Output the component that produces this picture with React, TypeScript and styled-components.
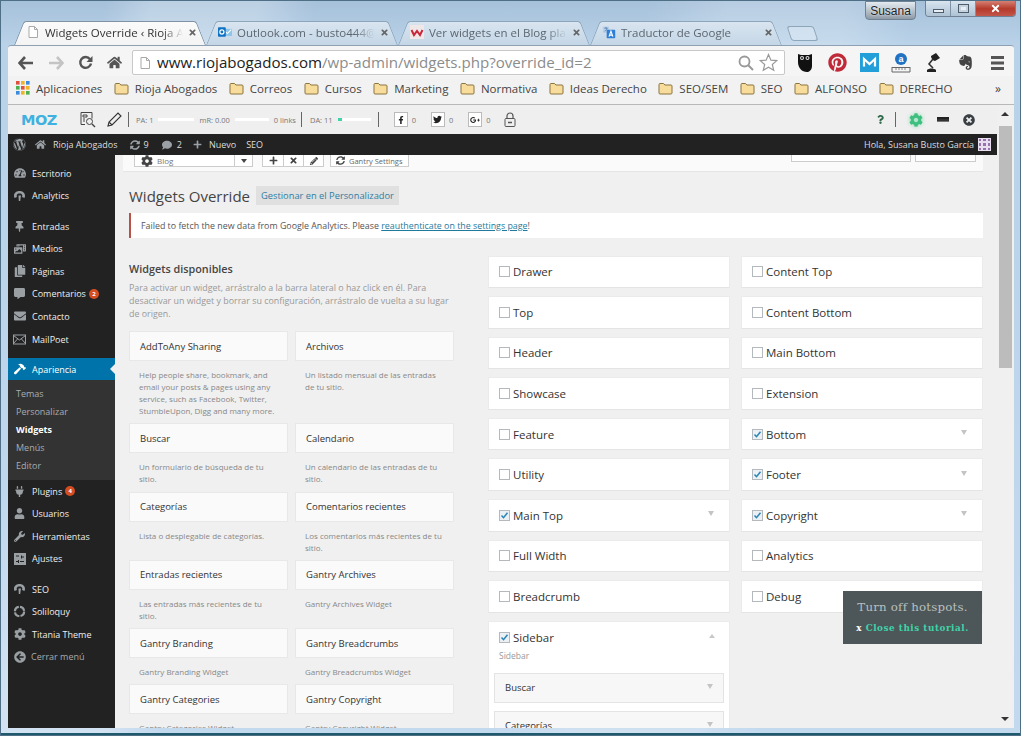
import React, { FC, ReactNode } from 'react'
import styled, { createGlobalStyle } from 'styled-components'
import {
  FaArrowCircleLeft,
  FaComment,
  FaCommentAlt,
  FaCopy,
  FaCog,
  FaEnvelope,
  FaEvernote,
  FaFacebookF,
  FaGooglePlusG,
  FaHammer,
  FaHome,
  FaPencilAlt,
  FaPhotoVideo,
  FaPinterest,
  FaPlug,
  FaPlus,
  FaQuestion,
  FaSyncAlt,
  FaTachometerAlt,
  FaThumbtack,
  FaTimes,
  FaTimesCircle,
  FaTwitter,
  FaUser,
  FaWordpress,
  FaWrench,
} from 'react-icons/fa'

const GlobalStyle = createGlobalStyle`
  html, body {
    margin: 0;
    height: 736px;
    overflow: hidden;
    background: #b9d2e8;
    font-family: "Open Sans", "Liberation Sans", sans-serif;
  }
  * { box-sizing: border-box; }
`

/* ---------- small drawings ---------- */

const PageIcon: FC = () => (
  <svg width="14" height="14" viewBox="0 0 14 14">
    <path d="M3 1.5h5.5L11.5 4.5v8H3z" fill="#fff" stroke="#a9a9a9" />
    <path d="M8.5 1.5v3h3" fill="none" stroke="#a9a9a9" />
  </svg>
)

const OutlookIcon: FC = () => (
  <svg width="18" height="14" viewBox="0 0 18 14">
    <rect x="7" y="3" width="11" height="9" fill="#8cc4ea" />
    <path d="M9 6l3 3 5-5" fill="none" stroke="#fff" strokeWidth="1.4" />
    <rect x="0" y="1" width="10" height="12" rx="1" fill="#0f72c2" />
    <circle cx="5" cy="7" r="2.6" fill="none" stroke="#fff" strokeWidth="1.6" />
  </svg>
)

const WidgetsFavicon: FC = () => (
  <svg width="14" height="14" viewBox="0 0 14 14">
    <rect width="14" height="14" fill="#f0e8e8" />
    <path d="M1.5 5l2.5 5 3-4 3 4 2.5-5" fill="none" stroke="#c9263a" strokeWidth="2" />
  </svg>
)

const TranslateIcon: FC = () => (
  <svg width="18" height="16" viewBox="0 0 18 16">
    <path d="M1 1h8v8H1z" fill="#b9cfe6" />
    <path d="M3 3h4M5 2v1M3.5 7C5 6 6 5 6.5 3" stroke="#4a78b0" fill="none" />
    <rect x="6" y="5" width="11" height="11" rx="1" fill="#2f7fd6" />
    <path d="M9 14l2.5-7 2.5 7M10 12h3" stroke="#fff" strokeWidth="1.4" fill="none" />
  </svg>
)

const BackIcon: FC<{ color: string; flip?: boolean }> = ({ color, flip }) => (
  <svg width="16" height="14" viewBox="0 0 16 14" style={flip ? { transform: 'scaleX(-1)' } : undefined}>
    <path d="M7 1L1.5 7 7 13M2 7h13" fill="none" stroke={color} strokeWidth="2.6" />
  </svg>
)

const ReloadIcon: FC = () => (
  <svg width="15" height="15" viewBox="0 0 15 15">
    <path d="M12 4.2A5.4 5.4 0 1 0 13 8.5" fill="none" stroke="#555" strokeWidth="2.4" />
    <path d="M14.5 1v6h-6z" fill="#555" />
  </svg>
)

const FolderIcon: FC = () => (
  <svg width="15" height="13" viewBox="0 0 15 13">
    <path
      d="M1 11V2.5C1 1.8 1.5 1.5 2 1.5h3.5l1.4 1.5H13c.6 0 1 .4 1 1v7c0 .6-.4 1-1 1H2c-.6 0-1-.4-1-1z"
      fill="#f7dc9c"
      stroke="#8a7440"
    />
  </svg>
)

const AppsIcon: FC = () => {
  const colours = ['#e0503f', '#f0b429', '#3d8bdc', '#4caf50', '#e0503f', '#f0b429', '#3d8bdc', '#f0b429', '#4caf50']
  return (
    <svg width="14" height="14" viewBox="0 0 14 14">
      {colours.map((c, i) => (
        <rect key={i} x={(i % 3) * 5} y={Math.floor(i / 3) * 5} width="3.6" height="3.6" fill={c} />
      ))}
    </svg>
  )
}

const OwlIcon: FC = () => (
  <svg width="14" height="20" viewBox="0 0 14 20">
    <path d="M0 1l3 1h8l3-1v12c0 4-3 6-5 6C4 19 0 15 0 9z" fill="#111" />
    <circle cx="4" cy="5" r="2" fill="#ddd" />
    <circle cx="9.5" cy="5" r="2" fill="#ddd" />
    <circle cx="4" cy="5" r=".9" fill="#111" />
    <circle cx="9.5" cy="5" r=".9" fill="#111" />
  </svg>
)

const MediumIcon: FC = () => (
  <svg width="19" height="19" viewBox="0 0 19 19">
    <rect width="19" height="19" fill="#229fd8" />
    <path d="M4 13.5V6l5.5 5L15 6v7.5" fill="none" stroke="#fff" strokeWidth="2.2" />
  </svg>
)

const AmazonIcon: FC = () => (
  <svg width="20" height="20" viewBox="0 0 20 20">
    <circle cx="10" cy="6" r="6" fill="#2272c3" />
    <text x="10" y="9" textAnchor="middle" fontSize="9" fontWeight="700" fontFamily="Liberation Sans" fill="#fff">
      a
    </text>
    <path d="M1 14.5h18M1 19h18M1 14v5M19 14v5" stroke="#666" fill="none" />
    <path d="M5 15v2M8 15v2M11 15v2M14 15v2" stroke="#888" />
  </svg>
)

const LampIcon: FC = () => (
  <svg width="16" height="20" viewBox="0 0 16 20">
    <path d="M6 3l5-3 4 5-5 3c-2 0-4-3-4-5z" fill="#222" />
    <path d="M8 6L4 11l4 4" fill="none" stroke="#333" strokeWidth="1.6" />
    <path d="M2 17c2-2 7-2 9 0v2H2z" fill="#222" />
  </svg>
)

const BurgerIcon: FC = () => (
  <svg width="13" height="14" viewBox="0 0 13 14">
    <path d="M0 0h13v3H0zM0 5.500h13v3H0zM0 11h13v3H0z" fill="#555" />
  </svg>
)

const SearchDocIcon: FC = () => (
  <svg width="16" height="16" viewBox="0 0 16 16">
    <path d="M1 .5h11v6M5 12.500H1V.5" fill="none" stroke="#444" />
    <path d="M3 3h4v2H3zM3 7h2M3 9h2" stroke="#444" fill="none" />
    <circle cx="9.500" cy="9.500" r="3" fill="none" stroke="#444" />
    <path d="M12 12l3 3" stroke="#444" strokeWidth="1.4" />
  </svg>
)

const PencilOutline: FC = () => (
  <svg width="15" height="15" viewBox="0 0 15 15">
    <path d="M1 14l1-4L11 1l3 3-9 9zM2 10l3 3" fill="none" stroke="#333" strokeWidth="1.1" />
  </svg>
)

const LockOutline: FC = () => (
  <svg width="12" height="15" viewBox="0 0 12 15">
    <rect x="1" y="6.500" width="10" height="8" rx="1" fill="none" stroke="#555" />
    <path d="M3 6.500V4a3 3 0 0 1 6 0v2.500" fill="none" stroke="#555" strokeWidth="1.200" />
    <path d="M4 10.500h4" stroke="#555" strokeWidth="1.500" />
  </svg>
)

const SwooshIcon: FC = () => (
  <svg width="13" height="12" viewBox="0 0 13 12">
    <path d="M1.500 8C-.5 3 4 1 6.500 1s7 2 5 7L9 7c1-2.500-.5-3.500-2.500-3.500S3 4.500 4 7z" fill="currentColor" />
    <path d="M5.500 5.500h2.500L7.200 11H5.800z" fill="currentColor" />
  </svg>
)

const EnvelopeLines: FC = () => (
  <svg width="13" height="11" viewBox="0 0 13 11">
    <rect x=".5" y="1" width="12" height="9" fill="none" stroke="currentColor" />
    <path d="M.5 1.500l6 4.500 6-4.500M.5 9.500l4-4.500M12.500 9.500l-4-4.500" fill="none" stroke="currentColor" />
  </svg>
)

const SettingsSquare: FC = () => (
  <svg width="12" height="12" viewBox="0 0 12 12">
    <path d="M0 0h12v12H0zM2 2.500v1h3v-1zM7 2.500v3h1v-1h2v-1H8v-1zM2 8v1h2v1h1V7H4v1zM6 8v1h4V8z" fill="currentColor" fillRule="evenodd" />
  </svg>
)

const RingIcon: FC = () => (
  <svg width="13" height="13" viewBox="0 0 13 13">
    <circle cx="6.500" cy="6.500" r="4.600" fill="none" stroke="currentColor" strokeWidth="2.200" strokeDasharray="6 1.200" />
  </svg>
)

const AvatarTile: FC = () => (
  <svg width="13" height="13" viewBox="0 0 13 13">
    <rect width="13" height="13" fill="#e8dff0" />
    <path d="M1 1h2v2H1zM5 1h3v2H5zM10 1h2v2h-2zM1 5h2v3H1zM5 5h3v3H5zM10 5h2v3h-2zM1 10h2v2H1zM5 10h3v2H5zM10 10h2v2h-2z" fill="#9a72ad" />
  </svg>
)

const CheckMark: FC = () => (
  <svg width="9" height="9" viewBox="0 0 9 9">
    <path d="M1.500 4.500l2 2.200 4-5" fill="none" stroke="#2a83b5" strokeWidth="1.500" />
  </svg>
)

/* ---------- data ---------- */

const tabs: { title: string; icon: ReactNode; active?: boolean }[] = [
  { title: 'Widgets Override ‹ Rioja A', icon: <PageIcon />, active: true },
  { title: 'Outlook.com - busto444@', icon: <OutlookIcon /> },
  { title: 'Ver widgets en el Blog pla', icon: <WidgetsFavicon /> },
  { title: 'Traductor de Google', icon: <TranslateIcon /> },
]

const bookmarks = [
  'Rioja Abogados',
  'Correos',
  'Cursos',
  'Marketing',
  'Normativa',
  'Ideas Derecho',
  'SEO/SEM',
  'SEO',
  'ALFONSO',
  'DERECHO',
]

type MenuEntry = { label: string; icon: ReactNode; badge?: string; gapBefore?: boolean }

const topMenu: MenuEntry[] = [
  { label: 'Escritorio', icon: <FaTachometerAlt size={12} /> },
  { label: 'Analytics', icon: <SwooshIcon /> },
  { label: 'Entradas', icon: <FaThumbtack size={11} />, gapBefore: true },
  { label: 'Medios', icon: <FaPhotoVideo size={12} /> },
  { label: 'Páginas', icon: <FaCopy size={12} /> },
  { label: 'Comentarios', icon: <FaCommentAlt size={11} />, badge: '2' },
  { label: 'Contacto', icon: <FaEnvelope size={12} /> },
  { label: 'MailPoet', icon: <EnvelopeLines /> },
]

const bottomMenu: MenuEntry[] = [
  { label: 'Plugins', icon: <FaPlug size={11} />, badge: '4' },
  { label: 'Usuarios', icon: <FaUser size={11} /> },
  { label: 'Herramientas', icon: <FaWrench size={11} /> },
  { label: 'Ajustes', icon: <SettingsSquare /> },
  { label: 'SEO', icon: <SwooshIcon />, gapBefore: true },
  { label: 'Soliloquy', icon: <RingIcon /> },
  { label: 'Titania Theme', icon: <FaCog size={12} /> },
]

const subMenu = ['Temas', 'Personalizar', 'Widgets', 'Menús', 'Editor']

const widgets: { name: string; desc: string }[] = [
  { name: 'AddToAny Sharing', desc: 'Help people share, bookmark, and email your posts & pages using any service, such as Facebook, Twitter, StumbleUpon, Digg and many more.' },
  { name: 'Archivos', desc: 'Un listado mensual de las entradas de tu sitio.' },
  { name: 'Buscar', desc: 'Un formulario de búsqueda de tu sitio.' },
  { name: 'Calendario', desc: 'Un calendario de las entradas de tu sitio.' },
  { name: 'Categorías', desc: 'Lista o desplegable de categorías.' },
  { name: 'Comentarios recientes', desc: 'Los comentarios más recientes de tu sitio.' },
  { name: 'Entradas recientes', desc: 'Las entradas más recientes de tu sitio.' },
  { name: 'Gantry Archives', desc: 'Gantry Archives Widget' },
  { name: 'Gantry Branding', desc: 'Gantry Branding Widget' },
  { name: 'Gantry Breadcrumbs', desc: 'Gantry Breadcrumbs Widget' },
  { name: 'Gantry Categories', desc: 'Gantry Categories Widget' },
  { name: 'Gantry Copyright', desc: 'Gantry Copyright Widget' },
]

const middleAreas: { name: string; checked?: boolean }[] = [
  { name: 'Drawer' },
  { name: 'Top' },
  { name: 'Header' },
  { name: 'Showcase' },
  { name: 'Feature' },
  { name: 'Utility' },
  { name: 'Main Top', checked: true },
  { name: 'Full Width' },
  { name: 'Breadcrumb' },
]

const rightAreas: { name: string; checked?: boolean }[] = [
  { name: 'Content Top' },
  { name: 'Content Bottom' },
  { name: 'Main Bottom' },
  { name: 'Extension' },
  { name: 'Bottom', checked: true },
  { name: 'Footer', checked: true },
  { name: 'Copyright', checked: true },
  { name: 'Analytics' },
  { name: 'Debug' },
]

/* ---------- small parts ---------- */

const AreaCard: FC<{ name: string; checked?: boolean }> = ({ name, checked }) => (
  <S.Area>
    <S.Check $checked={checked}>{checked && <CheckMark />}</S.Check>
    <S.AreaName>{name}</S.AreaName>
    {checked && <S.Caret />}
  </S.Area>
)

const MenuRow: FC<{ entry: MenuEntry }> = ({ entry }) => (
  <S.MenuItem $gap={entry.gapBefore}>
    <S.MenuIcon>{entry.icon}</S.MenuIcon>
    {entry.label}
    {entry.badge && <S.Badge>{entry.badge}</S.Badge>}
  </S.MenuItem>
)

const App: FC = () => {
  return (
    <S.Window>
      <GlobalStyle />
      <S.TitleStrip>
        <S.Tabs>
          {tabs.map(tab => (
            <S.Tab key={tab.title} $active={tab.active}>
              <S.TabIcon>{tab.icon}</S.TabIcon>
              <S.TabTitle $active={tab.active}>{tab.title}</S.TabTitle>
              <S.TabClose>
                <FaTimes size={9} />
              </S.TabClose>
            </S.Tab>
          ))}
          <S.NewTab />
        </S.Tabs>
        <S.UserChip>Susana</S.UserChip>
        <S.WindowButtons>
          <S.WindowButton>
            <S.MinGlyph />
          </S.WindowButton>
          <S.WindowButton>
            <S.MaxGlyph />
          </S.WindowButton>
          <S.CloseButton>
            <FaTimes size={11} />
          </S.CloseButton>
        </S.WindowButtons>
      </S.TitleStrip>

      <S.Toolbar>
        <S.NavButtons>
          <BackIcon color="#555" />
          <BackIcon color="#c4c4c4" flip />
          <ReloadIcon />
          <FaHome size={15} color="#555" />
        </S.NavButtons>
        <S.Omnibox>
          <PageIcon />
          <S.Url>
            www.riojabogados.com<S.UrlRest>/wp-admin/widgets.php?override_id=2</S.UrlRest>
          </S.Url>
          <S.OmniSearch>
            <svg width="16" height="16" viewBox="0 0 16 16">
              <circle cx="6.500" cy="6.500" r="5" fill="none" stroke="#999" strokeWidth="1.800" />
              <path d="M10 10l5 5" stroke="#999" strokeWidth="2" />
            </svg>
          </S.OmniSearch>
          <svg width="19" height="19" viewBox="0 0 24 24">
            <path
              d="M12 2l3 7 7.500.6-5.700 4.900 1.800 7.400L12 18l-6.600 3.900 1.800-7.400L1.500 9.600 9 9z"
              fill="#fff"
              stroke="#999"
              strokeWidth="1.500"
            />
          </svg>
        </S.Omnibox>
        <S.Extensions>
          <S.Extension><OwlIcon /></S.Extension>
          <S.Extension><FaPinterest size={19} color="#c02a38" /></S.Extension>
          <S.Extension><MediumIcon /></S.Extension>
          <S.Extension><AmazonIcon /></S.Extension>
          <S.Extension><LampIcon /></S.Extension>
          <S.Extension><FaEvernote size={17} color="#444" /></S.Extension>
          <S.Extension><BurgerIcon /></S.Extension>
        </S.Extensions>
      </S.Toolbar>

      <S.Bookmarks>
        <S.AppsLink>
          <AppsIcon />
          Aplicaciones
        </S.AppsLink>
        {bookmarks.map(mark => (
          <S.Bookmark key={mark}>
            <FolderIcon />
            {mark}
          </S.Bookmark>
        ))}
        <S.MoreMarks>»</S.MoreMarks>
      </S.Bookmarks>

      <S.Viewport>
        <S.Page>
          <S.MozBar>
            <S.MozLogo>MOZ</S.MozLogo>
            <S.MozSlot $left={20}><SearchDocIcon /></S.MozSlot>
            <S.MozSlot $left={11}><PencilOutline /></S.MozSlot>
            <S.MozDivider $left={6} />
            <S.MozLabel $left={7}>PA: 1</S.MozLabel>
            <S.Meter $left={5} $width={36} $fill={0} />
            <S.MozLabel $left={5}>mR: 0.00</S.MozLabel>
            <S.Meter $left={5} $width={34} $fill={0} />
            <S.MozLabel $left={5}>0 links</S.MozLabel>
            <S.MozDivider $left={5} />
            <S.MozLabel $left={8}>DA: 11</S.MozLabel>
            <S.Meter $left={5} $width={33} $fill={4} />
            <S.MozDivider $left={7} />
            <S.SocialBox $left={15}><FaFacebookF size={8} /></S.SocialBox>
            <S.MozLabel $left={4}>0</S.MozLabel>
            <S.SocialBox $left={15}><FaTwitter size={9} /></S.SocialBox>
            <S.MozLabel $left={4}>0</S.MozLabel>
            <S.SocialBox $left={15}><FaGooglePlusG size={10} /></S.SocialBox>
            <S.MozLabel $left={4}>0</S.MozLabel>
            <S.MozSlot $left={13}><LockOutline /></S.MozSlot>
            <S.MozTools>
              <FaQuestion size={9} color="#2f6b4a" />
              <S.MozDivider $left={-3} />
              <S.GearHalo><FaCog size={14} color="#3fbf7f" /></S.GearHalo>
              <S.DashGlyph />
              <FaTimesCircle size={12} color="#3a3f44" />
            </S.MozTools>
          </S.MozBar>

          <S.AdminBar>
            <S.AdminLeft>
              <S.AdminIcon $left={5}><FaWordpress size={13} /></S.AdminIcon>
              <S.AdminIcon $left={9}><FaHome size={11} /></S.AdminIcon>
              <S.AdminText $left={7}>Rioja Abogados</S.AdminText>
              <S.AdminIcon $left={12}><FaSyncAlt size={10} /></S.AdminIcon>
              <S.AdminText $left={4}>9</S.AdminText>
              <S.AdminIcon $left={13}><FaComment size={10} /></S.AdminIcon>
              <S.AdminText $left={5}>2</S.AdminText>
              <S.AdminIcon $left={11}><FaPlus size={9} /></S.AdminIcon>
              <S.AdminText $left={7}>Nuevo</S.AdminText>
              <S.AdminText $left={10}>SEO</S.AdminText>
            </S.AdminLeft>
            <S.AdminRight>
              Hola, Susana Busto García
              <AvatarTile />
            </S.AdminRight>
          </S.AdminBar>

          <S.Body>
            <S.Sidebar>
              {topMenu.map(entry => (
                <MenuRow key={entry.label} entry={entry} />
              ))}
              <S.CurrentItem>
                <S.MenuIcon><FaHammer size={12} /></S.MenuIcon>
                Apariencia
              </S.CurrentItem>
              <S.SubMenu>
                {subMenu.map(item => (
                  <S.SubItem key={item} $current={item === 'Widgets'}>{item}</S.SubItem>
                ))}
              </S.SubMenu>
              {bottomMenu.map(entry => (
                <MenuRow key={entry.label} entry={entry} />
              ))}
              <S.CollapseItem>
                <S.MenuIcon><FaArrowCircleLeft size={12} /></S.MenuIcon>
                Cerrar menú
              </S.CollapseItem>
            </S.Sidebar>

            <S.Content>
              <S.GantryBar>
                <S.GantrySelect>
                  <FaCog size={12} color="#444" />
                  <S.GantryName>Blog</S.GantryName>
                  <S.GantryCaret />
                </S.GantrySelect>
                <S.GantryGroup>
                  <S.GantryCell><FaPlus size={9} /></S.GantryCell>
                  <S.GantryCell><FaTimes size={9} /></S.GantryCell>
                  <S.GantryCell><FaPencilAlt size={8} /></S.GantryCell>
                </S.GantryGroup>
                <S.GantryButton>
                  <FaSyncAlt size={9} color="#444" />
                  Gantry Settings
                </S.GantryButton>
                <S.GantryShort $width={120} />
                <S.GantryShort $width={61} />
              </S.GantryBar>

              <S.TitleRow>
                <S.PageTitle>Widgets Override</S.PageTitle>
                <S.TitleAction>Gestionar en el Personalizador</S.TitleAction>
              </S.TitleRow>

              <S.Notice>
                Failed to fetch the new data from Google Analytics. Please{' '}
                <S.NoticeLink>reauthenticate on the settings page</S.NoticeLink>!
              </S.Notice>

              <S.Columns>
                <S.Available>
                  <S.AvailableTitle>Widgets disponibles</S.AvailableTitle>
                  <S.AvailableText>
                    Para activar un widget, arrástralo a la barra lateral o haz click en él. Para desactivar un
                    widget y borrar su configuración, arrástralo de vuelta a su lugar de origen.
                  </S.AvailableText>
                  <S.WidgetGrid>
                    {widgets.map(widget => (
                      <div key={widget.name}>
                        <S.WidgetCard>{widget.name}</S.WidgetCard>
                        <S.WidgetDesc>{widget.desc}</S.WidgetDesc>
                      </div>
                    ))}
                  </S.WidgetGrid>
                </S.Available>

                <S.AreaColumn>
                  {middleAreas.map(area => (
                    <AreaCard key={area.name} {...area} />
                  ))}
                  <S.OpenArea>
                    <S.OpenHead>
                      <S.Check $checked><CheckMark /></S.Check>
                      <S.AreaName>Sidebar</S.AreaName>
                      <S.CaretUp />
                    </S.OpenHead>
                    <S.OpenDesc>Sidebar</S.OpenDesc>
                    <S.Nested>
                      Buscar
                      <S.Caret />
                    </S.Nested>
                    <S.Nested>
                      Categorías
                      <S.Caret />
                    </S.Nested>
                  </S.OpenArea>
                </S.AreaColumn>

                <S.AreaColumn>
                  {rightAreas.map(area => (
                    <AreaCard key={area.name} {...area} />
                  ))}
                </S.AreaColumn>
              </S.Columns>

              <S.Hotspot>
                <S.HotspotTitle>Turn off hotspots.</S.HotspotTitle>
                <S.HotspotLink>
                  <S.HotspotX>x</S.HotspotX> Close this tutorial.
                </S.HotspotLink>
              </S.Hotspot>
            </S.Content>
          </S.Body>
        </S.Page>

        <S.Scrollbar>
          <S.ScrollUp />
          <S.ScrollThumb />
          <S.ScrollDown />
        </S.Scrollbar>
      </S.Viewport>
    </S.Window>
  )
}

const S = {
  Window: styled.div`
    width: 1021px;
    height: 736px;
    padding: 0 7px 5px 8px;
    display: flex;
    flex-direction: column;
    border-bottom: 3px solid #1e5a6c;
    outline: 1px solid #4f6f86;
    outline-offset: -1px;
    background:
      linear-gradient(102deg, transparent 0 9%, rgba(255, 255, 255, 0.25) 13% 22%, transparent 27% 55%, rgba(255, 255, 255, 0.2) 62% 72%, transparent 78%),
      linear-gradient(180deg, #a5c0da 0, #b9d2e8 44px, #c3d9ee 100%);
    color: #444;
  `,
  TitleStrip: styled.div`
    height: 45px;
    flex: none;
    display: flex;
    align-items: flex-start;
  `,
  Tabs: styled.div`
    flex: none;
    align-self: flex-end;
    padding-left: 6px;
    display: flex;
    align-items: flex-end;
    width: 850px;
  `,
  Tab: styled.div<{ $active?: boolean }>`
    position: relative;
    z-index: ${p => (p.$active ? 2 : 1)};
    width: 192px;
    height: 24px;
    padding: 0 7px 2px 12px;
    display: flex;
    align-items: center;
    gap: 5px;
    font-size: 11.500px;
    &::before,
    &::after {
      content: '';
      position: absolute;
      z-index: -1;
      top: 0;
      bottom: 0;
      width: 55%;
      background: ${p =>
        p.$active ? 'linear-gradient(180deg, #fafafa, #f4f4f4)' : 'linear-gradient(180deg, #d9e5f0, #c4d6e6)'};
      border-top: 1px solid ${p => (p.$active ? '#7f93a5' : '#8ea6ba')};
    }
    &::before {
      left: 0;
      transform-origin: bottom left;
      transform: skewX(-22deg);
      border-left: 1px solid ${p => (p.$active ? '#7f93a5' : '#8ea6ba')};
      border-top-left-radius: 3px;
    }
    &::after {
      right: 0;
      transform-origin: bottom right;
      transform: skewX(22deg);
      border-right: 1px solid ${p => (p.$active ? '#7f93a5' : '#8ea6ba')};
      border-top-right-radius: 3px;
    }
  `,
  TabIcon: styled.span`
    width: 14px;
    flex: none;
    display: flex;
    justify-content: flex-start;
  `,
  TabTitle: styled.span<{ $active?: boolean }>`
    flex: 1;
    min-width: 0;
    white-space: nowrap;
    overflow: hidden;
    color: ${p => (p.$active ? '#333' : '#5c6670')};
    mask-image: linear-gradient(90deg, #000 85%, transparent);
  `,
  TabClose: styled.span`
    flex: none;
    width: 11px;
    display: flex;
    color: #666;
  `,
  NewTab: styled.div`
    width: 27px;
    height: 15px;
    margin: 0 0 4px 7px;
    transform: skewX(18deg);
    border: 1px solid #8ea6ba;
    border-radius: 3px;
    background: rgba(225, 236, 246, 0.5);
  `,
  UserChip: styled.div`
    flex: none;
    width: 51px;
    height: 19px;
    margin-left: 7px;
    margin-top: 1px;
    display: flex;
    align-items: center;
    justify-content: center;
    font-family: 'Liberation Sans', sans-serif;
    font-size: 12px;
    color: #222;
    text-shadow: 0 0 2px #fff;
    border: 1px solid #6f8294;
    border-radius: 0 0 4px 4px;
    background: linear-gradient(180deg, #e4ebf1, #8e9aa6);
  `,
  WindowButtons: styled.div`
    flex: none;
    margin-left: 9px;
    display: flex;
    height: 17px;
    border: 1px solid #6f8294;
    border-top: none;
    border-radius: 0 0 4px 4px;
    overflow: hidden;
  `,
  WindowButton: styled.div`
    width: 25px;
    display: flex;
    align-items: center;
    justify-content: center;
    background: linear-gradient(180deg, #dbe7f1, #aec2d4);
    border-right: 1px solid #7e93a6;
  `,
  MinGlyph: styled.span`
    width: 11px;
    height: 4px;
    margin-top: 5px;
    background: #e8eef3;
    border: 1px solid #4d5d6b;
  `,
  MaxGlyph: styled.span`
    width: 11px;
    height: 9px;
    border: 1px solid #4d5d6b;
    background: #e8eef3;
    box-shadow: inset 0 0 0 2px #c5d3df;
  `,
  CloseButton: styled.div`
    width: 39px;
    display: flex;
    align-items: center;
    justify-content: center;
    color: #fff;
    background: linear-gradient(180deg, #d98a7c, #b53a2c 55%, #c2564a);
  `,
  Toolbar: styled.div`
    height: 31px;
    flex: none;
    padding: 3px 0 0 10px;
    display: flex;
    align-items: center;
    background: #f5f5f5;
    border-top-left-radius: 3px;
    border-top-right-radius: 3px;
    border-top: 1px solid #8ea1b2;
  `,
  NavButtons: styled.div`
    display: flex;
    align-items: center;
    gap: 14px;
    width: 114px;
  `,
  Omnibox: styled.div`
    width: 653px;
    height: 25px;
    padding: 0 6px 0 5px;
    display: flex;
    align-items: center;
    gap: 5px;
    background: #fff;
    border: 1px solid #c8c8c8;
    border-radius: 2px;
  `,
  Url: styled.span`
    flex: 1;
    margin-top: -2px;
    font-size: 15.100px;
    color: #222;
    white-space: nowrap;
  `,
  UrlRest: styled.span`
    color: #8c8c8c;
  `,
  OmniSearch: styled.span`
    display: flex;
    margin-right: 0;
  `,
  Extensions: styled.div`
    margin-left: 4px;
    display: flex;
  `,
  Extension: styled.span`
    width: 32px;
    display: flex;
    align-items: center;
    justify-content: center;
  `,
  Bookmarks: styled.div`
    height: 29px;
    flex: none;
    padding: 0 0 4px 8px;
    display: flex;
    align-items: center;
    gap: 11.500px;
    font-size: 11.500px;
    color: #444;
    white-space: nowrap;
    background: #f2f2f2;
    border-bottom: 1px solid #b8b8b8;
  `,
  AppsLink: styled.span`
    display: flex;
    align-items: center;
    gap: 6px;
  `,
  Bookmark: styled.span`
    display: flex;
    align-items: center;
    gap: 6px;
  `,
  MoreMarks: styled.span`
    margin-left: auto;
    margin-right: 13px;
    font-size: 12px;
  `,
  Viewport: styled.div`
    flex: 1;
    min-height: 0;
    display: flex;
  `,
  Page: styled.div`
    flex: 1;
    min-width: 0;
    display: flex;
    flex-direction: column;
  `,
  MozBar: styled.div`
    height: 29px;
    flex: none;
    padding-left: 13px;
    display: flex;
    align-items: center;
    background: #efefef;
  `,
  MozLogo: styled.span`
    width: 39px;
    font-family: 'DejaVu Sans', sans-serif;
    font-weight: 700;
    font-size: 14.500px;
    letter-spacing: -0.5px;
    color: #3fb1e0;
  `,
  MozSlot: styled.span<{ $left: number }>`
    margin-left: ${p => p.$left}px;
    display: flex;
  `,
  MozDivider: styled.span<{ $left: number }>`
    width: 1px;
    height: 15px;
    margin-left: ${p => p.$left}px;
    background: #666;
  `,
  MozLabel: styled.span<{ $left: number }>`
    margin-left: ${p => p.$left}px;
    font-size: 7.500px;
    color: #777;
    white-space: nowrap;
  `,
  Meter: styled.span<{ $left: number; $width: number; $fill: number }>`
    width: ${p => p.$width}px;
    height: 3px;
    margin-left: ${p => p.$left}px;
    background: linear-gradient(90deg, #3fd3a8 ${p => p.$fill}px, #fff ${p => p.$fill}px);
  `,
  SocialBox: styled.span<{ $left: number }>`
    width: 14px;
    height: 15px;
    margin-left: ${p => p.$left}px;
    display: flex;
    align-items: center;
    justify-content: center;
    color: #222;
    background: #fff;
    border: 1px solid #bbb;
  `,
  MozTools: styled.div`
    margin-left: auto;
    margin-right: 22px;
    display: flex;
    align-items: center;
    gap: 13px;
  `,
  GearHalo: styled.span`
    display: flex;
    filter: drop-shadow(0 0 2px #8fe0b8);
  `,
  DashGlyph: styled.span`
    width: 12px;
    height: 5px;
    margin: 0 1px;
    background: #333;
    border-top: 2px solid #222;
    border-bottom: 1px solid #777;
  `,
  AdminBar: styled.div`
    height: 21px;
    flex: none;
    padding-right: 6px;
    display: flex;
    align-items: center;
    justify-content: space-between;
    background: #222;
    color: #ddd;
    font-size: 9px;
    white-space: nowrap;
  `,
  AdminLeft: styled.div`
    display: flex;
    align-items: center;
  `,
  AdminIcon: styled.span<{ $left: number }>`
    margin-left: ${p => p.$left}px;
    display: flex;
    color: #9aa0a5;
  `,
  AdminText: styled.span<{ $left: number }>`
    margin-left: ${p => p.$left}px;
  `,
  AdminRight: styled.div`
    display: flex;
    align-items: center;
    gap: 4px;
  `,
  Body: styled.div`
    flex: 1;
    min-height: 0;
    display: flex;
    overflow: hidden;
    background: #f0f0f0;
  `,
  Sidebar: styled.nav`
    width: 107px;
    flex: none;
    padding-top: 7px;
    background: #222;
    color: #eee;
    font-size: 9px;
    white-space: nowrap;
  `,
  MenuItem: styled.div<{ $gap?: boolean }>`
    height: 22.600px;
    margin-top: ${p => (p.$gap ? '7.600px' : 0)};
    padding-left: 5px;
    display: flex;
    align-items: center;
    gap: 6px;
  `,
  MenuIcon: styled.span`
    width: 13px;
    display: flex;
    justify-content: center;
    color: #9a9fa4;
  `,
  Badge: styled.span`
    width: 10px;
    height: 10px;
    margin-left: -3px;
    display: flex;
    align-items: center;
    justify-content: center;
    border-radius: 50%;
    background: #d54e21;
    color: #fff;
    font-size: 6px;
    font-weight: 700;
  `,
  CurrentItem: styled.div`
    position: relative;
    height: 21.500px;
    margin-top: 8px;
    padding-left: 5px;
    display: flex;
    align-items: center;
    gap: 6px;
    background: #0073aa;
    color: #fff;
    & > span {
      color: #fff;
    }
    &::after {
      content: '';
      position: absolute;
      right: 0;
      top: 6px;
      border: 5px solid transparent;
      border-right-color: #f0f0f0;
      border-left: none;
    }
  `,
  SubMenu: styled.div`
    padding: 5px 0 5px 8px;
    background: #333;
  `,
  SubItem: styled.div<{ $current?: boolean }>`
    height: 18px;
    line-height: 18px;
    color: ${p => (p.$current ? '#fff' : '#a8adb2')};
    font-weight: ${p => (p.$current ? 700 : 400)};
  `,
  CollapseItem: styled.div`
    height: 22.600px;
    padding-left: 5px;
    display: flex;
    align-items: center;
    gap: 5px;
    color: #aaa;
  `,
  Content: styled.main`
    position: relative;
    flex: 1;
    min-width: 0;
    padding: 0 14px;
  `,
  GantryBar: styled.div`
    height: 17px;
    margin-left: -6px;
    padding-left: 11px;
    display: flex;
    align-items: flex-start;
    background: #fafafa;
    border-bottom: 1px solid #e5e5e5;
  `,
  GantrySelect: styled.div`
    width: 119px;
    height: 12px;
    padding-left: 6px;
    display: flex;
    align-items: center;
    gap: 4px;
    background: #fff;
    border: 1px solid #ccc;
    border-top: none;
  `,
  GantryName: styled.span`
    flex: 1;
    font-size: 8px;
    color: #777;
  `,
  GantryCaret: styled.span`
    width: 18px;
    height: 100%;
    display: flex;
    align-items: center;
    justify-content: center;
    border-left: 1px solid #ccc;
    &::after {
      content: '';
      border: 3px solid transparent;
      border-top: 4px solid #444;
      border-bottom: none;
    }
  `,
  GantryGroup: styled.div`
    margin-left: 9px;
    height: 12px;
    display: flex;
    background: #fff;
    border: 1px solid #ccc;
    border-top: none;
  `,
  GantryCell: styled.span`
    width: 20px;
    display: flex;
    align-items: center;
    justify-content: center;
    color: #444;
    & + & {
      border-left: 1px solid #ccc;
    }
  `,
  GantryButton: styled.div`
    width: 79px;
    height: 12px;
    margin-left: 6px;
    padding-left: 5px;
    display: flex;
    align-items: center;
    gap: 4px;
    font-size: 7.500px;
    color: #666;
    white-space: nowrap;
    background: #fff;
    border: 1px solid #ccc;
    border-top: none;
  `,
  GantryShort: styled.div<{ $width: number }>`
    width: ${p => p.$width}px;
    height: 7px;
    background: #fff;
    border: 1px solid #ccc;
    border-top: none;
    margin-left: 4px;
    &:nth-child(4) {
      margin-left: auto;
    }
    &:last-child {
      margin-right: 7px;
    }
  `,
  TitleRow: styled.div`
    margin-top: 14px;
    height: 19px;
    display: flex;
    align-items: center;
    gap: 6px;
  `,
  PageTitle: styled.h1`
    margin: 0;
    font-size: 15px;
    font-weight: 400;
    color: #444;
    white-space: nowrap;
  `,
  TitleAction: styled.span`
    height: 19px;
    padding: 0 5px;
    display: flex;
    align-items: center;
    font-size: 9.300px;
    color: #2e7ea3;
    background: #e0e0e0;
    white-space: nowrap;
  `,
  Notice: styled.div`
    height: 25px;
    margin-top: 8px;
    padding-left: 10px;
    display: flex;
    align-items: center;
    white-space: pre-wrap;
    font-size: 8.850px;
    color: #555;
    background: #fff;
    border-left: 2px solid #b5534b;
  `,
  NoticeLink: styled.span`
    color: #1f7a9c;
    text-decoration: underline;
  `,
  Columns: styled.div`
    margin-top: 17.500px;
    display: grid;
    grid-template-columns: 325px 242px 242px;
    column-gap: 11px;
    align-items: start;
  `,
  Available: styled.section`
    width: 325px;
    margin-right: 34px;
    padding-top: 6px;
  `,
  AvailableTitle: styled.h2`
    margin: 0;
    height: 14px;
    font-size: 10.800px;
    line-height: 14px;
    font-weight: 600;
    color: #444;
  `,
  AvailableText: styled.p`
    margin: 5.500px 0 11px;
    font-size: 8.900px;
    line-height: 13px;
    color: #999;
  `,
  WidgetGrid: styled.div`
    display: grid;
    grid-template-columns: 159px 159px;
    column-gap: 7px;
  `,
  WidgetCard: styled.div`
    height: 30px;
    padding-left: 10px;
    display: flex;
    align-items: center;
    font-size: 9.500px;
    color: #333;
    background: #fafafa;
    border: 1px solid #e8e8e8;
  `,
  WidgetDesc: styled.p`
    margin: 0;
    padding: 8px 12px 6.250px 10px;
    font-size: 8px;
    line-height: 12px;
    color: #888;
  `,
  AreaColumn: styled.div`
    display: flex;
    flex-direction: column;
    gap: 8px;
    &:nth-child(2),
    &:nth-child(3) {
      margin-left: 23px;
      margin-right: -23px;
    }
  `,
  Area: styled.div`
    height: 32.600px;
    padding: 0 15px 0 10px;
    display: flex;
    align-items: center;
    background: #fff;
    border: 1px solid #ebebeb;
    border-bottom-color: #e4e4e4;
  `,
  Check: styled.span<{ $checked?: boolean }>`
    width: 11px;
    height: 11px;
    flex: none;
    display: flex;
    align-items: center;
    justify-content: center;
    background: ${p => (p.$checked ? '#eaf0f4' : '#fff')};
    border: 1px solid #b4b9be;
  `,
  AreaName: styled.span`
    margin-left: 3px;
    flex: 1;
    font-size: 11.500px;
    color: #333;
  `,
  Caret: styled.span`
    width: 0;
    height: 0;
    margin-top: -3px;
    margin-left: auto;
    border: 3px solid transparent;
    border-top: 5px solid #c4c4c4;
    border-bottom: none;
  `,
  CaretUp: styled.span`
    width: 0;
    height: 0;
    margin-top: -3px;
    border: 3px solid transparent;
    border-bottom: 4px solid #c8c8c8;
    border-top: none;
  `,
  OpenArea: styled.div`
    height: 140px;
    padding: 0 5px;
    background: #fff;
    border: 1px solid #ebebeb;
  `,
  OpenHead: styled.div`
    height: 32px;
    padding: 0 9px 0 5px;
    display: flex;
    align-items: center;
  `,
  OpenDesc: styled.div`
    margin-top: -3px;
    padding: 0 0 4px 5px;
    font-size: 8.500px;
    line-height: 10px;
    color: #999;
  `,
  Nested: styled.div`
    height: 30px;
    margin-top: 8px;
    padding: 0 10px;
    display: flex;
    align-items: center;
    font-size: 9.500px;
    color: #333;
    background: #f7f7f7;
    border: 1px solid #e3e3e3;
  `,
  Hotspot: styled.aside`
    position: absolute;
    left: 728px;
    top: 436px;
    width: 139px;
    height: 53px;
    padding-top: 9px;
    background: #4d5759;
    font-family: 'DejaVu Serif', serif;
    text-align: center;
  `,
  HotspotTitle: styled.div`
    font-size: 11.800px;
    line-height: 14px;
    letter-spacing: 0.2px;
    color: #b9bfbf;
    white-space: nowrap;
  `,
  HotspotLink: styled.div`
    margin-top: 8px;
    font-size: 8.800px;
    line-height: 12px;
    font-weight: 700;
    letter-spacing: 0.55px;
    color: #3fd3a8;
    white-space: nowrap;
  `,
  HotspotX: styled.span`
    color: #fff;
  `,
  Scrollbar: styled.div`
    width: 17px;
    flex: none;
    padding: 0 2px 0 1px;
    display: flex;
    flex-direction: column;
    align-items: center;
    background: #f0f0f0;
  `,
  ScrollUp: styled.span`
    margin-top: 7px;
    border: 4px solid transparent;
    border-bottom: 4px solid #333;
    border-top: none;
  `,
  ScrollThumb: styled.span`
    width: 13px;
    height: 242px;
    margin-top: 10px;
    background: #bcbcbc;
  `,
  ScrollDown: styled.span`
    margin-top: auto;
    margin-bottom: 7px;
    border: 4px solid transparent;
    border-top: 4px solid #333;
    border-bottom: none;
  `,
}

export default App
